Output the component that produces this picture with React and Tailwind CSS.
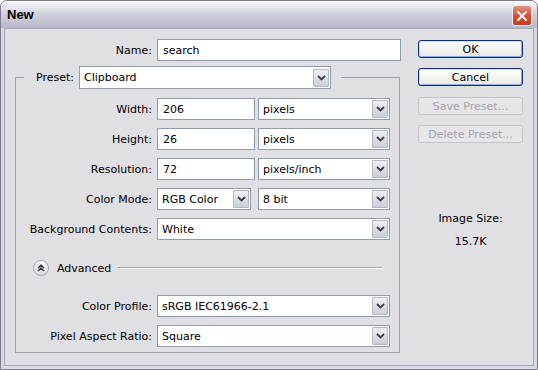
import React from "react";

const Chevron = () => (
  <svg width="9" height="6" viewBox="0 0 9 6">
    <path d="M1 1 L4.5 4.5 L8 1" fill="none" stroke="#3b3f48" strokeWidth="1.8" />
  </svg>
);

function Select({ text, w }) {
  return (
    <div className={`${w} h-[22px] border border-[#8f9cae] bg-white flex items-center`}>
      <span className="flex-1 pl-[4px] truncate">{text}</span>
      <div className="w-[16px] h-[18px] mr-[1px] border border-[#b4b8c4] rounded-[1px] bg-gradient-to-b from-[#eeeff3] to-[#ccced6] flex items-center justify-center">
        <Chevron />
      </div>
    </div>
  );
}

function Input({ text, w }) {
  return (
    <div className={`${w} h-[22px] border border-[#8f9cae] bg-white flex items-center pl-[5px]`}>
      {text}
    </div>
  );
}

function Row({ label, children, className = "" }) {
  return (
    <div className={`flex items-center ${className}`}>
      <span className="w-[136px] text-right">{label}</span>
      <div className="ml-[5px] flex items-center gap-[3px]">{children}</div>
    </div>
  );
}

function Btn({ children, className = "", disabled }) {
  return disabled ? (
    <div className={`w-[105px] h-[18px] rounded-[3px] border border-[#c6c5ca] bg-[#e6e5ea] text-[#a5a4a9] flex items-center justify-center ${className}`}>
      {children}
    </div>
  ) : (
    <div className={`w-[105px] h-[18px] rounded-[3px] border border-[#0c2f6e] bg-gradient-to-b from-[#ffffff] to-[#e8e8e4] shadow-[inset_1px_1px_0_#cbdaf6,inset_-1px_-1px_0_#92abe0] text-black flex items-center justify-center ${className}`}>
      {children}
    </div>
  );
}

export default function App() {
  return (
    <div
      className="w-[538px] h-[370px] flex flex-col overflow-hidden rounded-t-[7px] border border-[#7d7d8e] bg-[#d7d7e1] text-[11px] text-black leading-[13px]"
      style={{ fontFamily: '"DejaVu Sans", sans-serif' }}
    >
      {/* title bar */}
      <div className="h-[27px] shrink-0 flex items-center pl-[6px] pr-[5px] bg-gradient-to-b from-[#fbfbfd] via-[#cfcfdc] to-[#b8b8cb]">
        <span className="flex-1 font-bold text-[13px] text-black" style={{ fontFamily: '"Liberation Sans", sans-serif' }}>
          New
        </span>
        <div className="w-[20px] h-[21px] mt-[2px] rounded-[3px] border border-[#f5f0ee] bg-gradient-to-b from-[#e7927a] via-[#d2523b] to-[#c23b22] flex items-center justify-center">
          <svg width="12" height="12" viewBox="0 0 12 12">
            <path d="M2 2 L10 10 M10 2 L2 10" stroke="#ffffff" strokeWidth="2" strokeLinecap="round" />
          </svg>
        </div>
      </div>
      {/* body */}
      <div className="flex-1 flex border-x-[3px] border-b-[3px] border-[#d7d7e1]">
        <div className="flex-1 flex bg-[#e0dfe3] border border-[#a5a5b5]">
          {/* left */}
          <div className="w-[400px] flex flex-col pt-[10px]">
            <div className="flex items-center">
              <span className="w-[147px] text-right">Name:</span>
              <div className="ml-[5px]">
                <Input text="search" w="w-[244px]" />
              </div>
            </div>
            <fieldset className="ml-[10px] mt-[5px] w-[385px] border border-[#a3a2a8] pb-[5px]">
              <legend className="ml-[8px] pr-[10px]">
                <div className="flex items-center">
                  <span className="w-[50px] text-right">Preset:</span>
                  <div className="ml-[5px]">
                    <Select text="Clipboard" w="w-[252px] h-[23px]" />
                  </div>
                </div>
              </legend>
              <div className="flex flex-col pt-[9px] gap-[8px]">
                <Row label="Width:">
                  <Input text="206" w="w-[98px]" />
                  <Select text="pixels" w="w-[132px]" />
                </Row>
                <Row label="Height:">
                  <Input text="26" w="w-[98px]" />
                  <Select text="pixels" w="w-[132px]" />
                </Row>
                <Row label="Resolution:">
                  <Input text="72" w="w-[98px]" />
                  <Select text="pixels/inch" w="w-[132px]" />
                </Row>
                <Row label="Color Mode:">
                  <Select text="RGB Color" w="w-[94px]" />
                  <div className="ml-[4px]">
                    <Select text="8 bit" w="w-[132px]" />
                  </div>
                </Row>
                <Row label="Background Contents:">
                  <Select text="White" w="w-[233px]" />
                </Row>
              </div>
              <div className="flex items-center h-[16px] mt-[20px] pl-[17px] pr-[16px]">
                <div className="w-[16px] h-[16px] rounded-full border border-[#a3a3ab] bg-gradient-to-b from-[#ffffff] to-[#d9d9e0] flex items-center justify-center">
                  <svg width="8" height="8" viewBox="0 0 8 8">
                    <path d="M1 4 L4 1.2 L7 4 M1 7 L4 4.2 L7 7" fill="none" stroke="#2e2e36" strokeWidth="1.4" />
                  </svg>
                </div>
                <span className="ml-[8px]">Advanced</span>
                <div className="flex-1 ml-[6px] h-[2px] border-t border-[#a6a5ab] border-b border-b-white" />
              </div>
              <div className="flex flex-col pt-[19px] gap-[8px]">
                <Row label="Color Profile:">
                  <Select text="sRGB IEC61966-2.1" w="w-[233px]" />
                </Row>
                <Row label="Pixel Aspect Ratio:">
                  <Select text="Square" w="w-[233px]" />
                </Row>
              </div>
            </fieldset>
          </div>
          {/* right */}
          <div className="flex-1 flex flex-col pl-[13px] pt-[11px]">
            <Btn>OK</Btn>
            <Btn className="mt-[10px]">Cancel</Btn>
            <Btn className="mt-[11px]" disabled>Save Preset...</Btn>
            <Btn className="mt-[10px]" disabled>Delete Preset...</Btn>
            <div className="w-[105px] text-center mt-[69px]">Image Size:</div>
            <div className="w-[105px] text-center mt-[10px]">15.7K</div>
          </div>
        </div>
      </div>
    </div>
  );
}
